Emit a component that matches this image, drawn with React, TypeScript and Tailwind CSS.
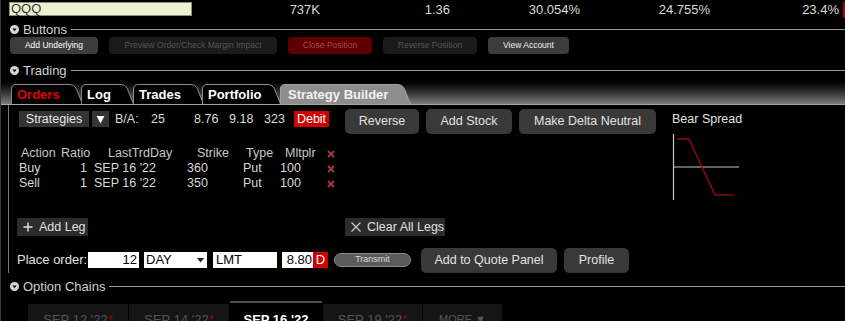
import React from "react";

const SectionHeader = ({ title, className = "" }: { title: string; className?: string }) => (
  <div className={"flex h-[16px] items-center " + className}>
    <svg width="9" height="9" viewBox="0 0 9 9" className="ml-[9px] mr-[4px] shrink-0">
      <circle cx="4.5" cy="4.5" r="4.5" fill="#d6d6d6" />
      <path d="M2.4 3.4 L6.6 3.4 L4.5 6.2 Z" fill="#000" />
    </svg>
    <span className="text-[13px] leading-none text-[#cfcfcf]">{title}</span>
    <div className="ml-[4px] h-px flex-1 bg-[#9a9a9a]" />
  </div>
);

const Tab = ({
  label,
  width,
  active,
  red,
  className = "",
}: {
  label: string;
  width: number;
  active?: boolean;
  red?: boolean;
  className?: string;
}) => {
  const w = width;
  const d = `M0.5,20 V5 Q0.5,0.5 5,0.5 H${w - 13} Q${w - 9},0.5 ${w - 7},4 L${w - 0.5},20`;
  return (
    <div className={"relative h-[20px] shrink-0 " + className} style={{ width: w }}>
      <svg className="absolute inset-0" width={w} height="20" viewBox={`0 0 ${w} 20`}>
        <path d={d} fill={active ? "#8d8d8d" : "#000"} stroke={active ? "#a0a0a0" : "#8a8a8a"} strokeWidth="1" />
      </svg>
      <span
        className={
          "relative block pl-[6px] pt-[3px] text-[13px] font-bold leading-[15px] " +
          (red ? "text-[#e00000]" : active ? "text-[#f2f2f2] pl-[8px]" : "text-white")
        }
      >
        {label}
      </span>
    </div>
  );
};

const XMark = () => (
  <svg width="8" height="8" viewBox="0 0 8 8">
    <path d="M1 1 L7 7 M7 1 L1 7" stroke="#9c3b3b" strokeWidth="2" />
  </svg>
);

const legs = [
  { action: "Buy", ratio: "1", day: "SEP 16 '22", strike: "360", type: "Put", mult: "100" },
  { action: "Sell", ratio: "1", day: "SEP 16 '22", strike: "350", type: "Put", mult: "100" },
];

const smallBtn = "flex h-[17px] items-center justify-center rounded-[4px] text-[8.5px]";
const bigBtn = "flex h-[25px] items-center justify-center rounded-[5px] bg-[#393939] text-[12.5px] text-[#e2e2e2]";

export default function App() {
  return (
    <div className="h-[321px] w-[845px] overflow-hidden border-l border-[#3a3a3a] bg-black font-['Liberation_Sans',Arial,sans-serif] text-[#dedede]">
      {/* quote row */}
      <div className="flex h-[20px] items-start">
        <div className="ml-[8px] mt-[2px] flex h-[14px] w-[184px] items-end border border-[#8d8f78] bg-[#eef0d2] pl-px text-[13px] leading-[13px] text-[#333]">
          QQQ
        </div>
        <div className="flex h-[20px] items-center text-[13px] text-[#dadada]">
          <span className="w-[128px] text-right">737K</span>
          <span className="w-[130px] text-right">1.36</span>
          <span className="w-[130px] text-right">30.054%</span>
          <span className="w-[130px] text-right">24.755%</span>
          <span className="w-[129px] text-right">23.4%</span>
          <span className="ml-[4px] h-[16px] w-[2px] bg-[#b00000]" />
        </div>
      </div>

      <SectionHeader title="Buttons" className="mt-[1px]" />

      <div className="flex gap-[11px] pl-[9px]">
        <div className={smallBtn + " w-[88px] bg-[#3c3c3c] text-white"}>Add Underlying</div>
        <div className={smallBtn + " w-[168px] bg-[#1b1b1b] text-[#555]"}>Preview Order/Check Margin Impact</div>
        <div className={smallBtn + " w-[84px] bg-[#5e0000] text-[#a84848]"}>Close Position</div>
        <div className={smallBtn + " w-[94px] bg-[#1b1b1b] text-[#555]"}>Reverse Position</div>
        <div className={smallBtn + " w-[81px] bg-[#3c3c3c] text-[#eee]"}>View Account</div>
      </div>

      <SectionHeader title="Trading" className="mt-[8px]" />

      {/* tab strip */}
      <div className="flex h-[27px] items-end border-b border-[#a5a5a5] bg-linear-to-b from-black to-[#7c7c7c] pl-[10px]">
        <Tab label="Orders" width={72} red />
        <Tab label="Log" width={53} className="-ml-[2px]" />
        <Tab label="Trades" width={71} className="-ml-[1px]" />
        <Tab label="Portfolio" width={79} className="-ml-[2px]" />
        <Tab label="Strategy Builder" width={131} active className="-ml-[1px]" />
      </div>

      {/* strategy builder panel */}
      <div className="ml-[7px] h-[168px] border-l border-[#7a7a7a] pl-[9px] pt-[4px]">
        <div className="flex">
          <div className="flex flex-col">
            <div className="flex h-[25px] items-start">
              <div className="mt-px flex w-[327px] items-center text-[12.5px] text-[#dcdcdc]">
                <div className="ml-px flex h-[16px] w-[70px] items-center justify-center bg-[#343434] text-[#e6e6e6]">
                  Strategies
                </div>
                <div className="ml-[3px] flex h-[16px] w-[17px] items-center justify-center bg-[#343434]">
                  <svg width="9" height="9" viewBox="0 0 9 9">
                    <path d="M0.5 1 L8.5 1 L4.5 8.5 Z" fill="#fff" />
                  </svg>
                </div>
                <span className="ml-[6px] w-[36px]">B/A:</span>
                <span className="w-[43px]">25</span>
                <span className="w-[35px]">8.76</span>
                <span className="w-[35px]">9.18</span>
                <span className="w-[30px]">323</span>
                <span className="flex h-[16px] w-[35px] items-center justify-center bg-[#d20000] text-white">Debit</span>
              </div>
              <div className={bigBtn + " w-[74px]"}>Reverse</div>
              <div className={bigBtn + " ml-[7px] w-[86px]"}>Add Stock</div>
              <div className={bigBtn + " ml-[7px] w-[137px]"}>Make Delta Neutral</div>
            </div>

            {/* legs table */}
            <div className="mt-[12px] w-[327px] text-[12.5px] text-[#d8d8d8]">
              <div className="flex h-[15px] items-center text-[#c8c8c8]">
                <span className="w-[41px] pl-[3px]">Action</span>
                <span className="w-[32px] pl-[2px]">Ratio</span>
                <span className="w-[90px] pl-[17px]">LastTrdDay</span>
                <span className="w-[60px] pl-[16px]">Strike</span>
                <span className="w-[38px] pl-[5px]">Type</span>
                <span className="w-[44px] pl-[6px]">Mltplr</span>
                <span className="pl-[4px]">
                  <XMark />
                </span>
              </div>
              {legs.map((l) => (
                <div key={l.action} className="flex h-[15px] items-center">
                  <span className="w-[41px] pl-px">{l.action}</span>
                  <span className="w-[32px] pr-[4px] text-right">{l.ratio}</span>
                  <span className="w-[90px] pl-[3px]">{l.day}</span>
                  <span className="w-[60px] pl-[6px]">{l.strike}</span>
                  <span className="w-[38px] pl-[2px]">{l.type}</span>
                  <span className="w-[44px] pl-px">{l.mult}</span>
                  <span className="pl-[4px]">
                    <XMark />
                  </span>
                </div>
              ))}
            </div>

            <div className="mt-[27px] flex h-[18px] text-[12.5px] text-[#e0e0e0]">
              <div className="w-[327px]">
                <div className="-ml-px flex h-[18px] w-[71px] items-center bg-[#2c2c2c] pl-[6px]">
                  <svg width="10" height="10" viewBox="0 0 10 10" className="mr-[6px]">
                    <path d="M5 0.5 V9.5 M0.5 5 H9.5" stroke="#e6e6e6" strokeWidth="1.4" />
                  </svg>
                  Add Leg
                </div>
              </div>
              <div className="flex h-[18px] w-[100px] items-center bg-[#2c2c2c] pl-[6px]">
                <svg width="10" height="10" viewBox="0 0 10 10" className="mr-[6px]">
                  <path d="M0.5 0.5 L9.5 9.5 M9.5 0.5 L0.5 9.5" stroke="#d0d0d0" strokeWidth="1.1" />
                </svg>
                Clear All Legs
              </div>
            </div>
          </div>

          {/* payoff diagram */}
          <div className="ml-[16px] flex flex-col">
            <span className="mt-[3px] text-[12.5px] leading-[14px] text-[#e0e0e0]">Bear Spread</span>
            <svg width="70" height="70" viewBox="0 0 70 70" className="mt-[6px]">
              <path d="M1.5 2 V68" stroke="#c8c8c8" strokeWidth="1.2" />
              <path d="M1.5 35 H67" stroke="#c8c8c8" strokeWidth="1.2" />
              <path d="M5 7 H17 L43 63 H62" fill="none" stroke="#8a0a0a" strokeWidth="1.6" />
            </svg>
          </div>
        </div>

        {/* place order */}
        <div className="mt-[12px] flex h-[24px] items-center text-[13px]">
          <span className="-ml-px w-[71px] text-[#e0e0e0]">Place order:</span>
          <div className="flex h-[16px] w-[51px] items-center justify-end bg-white pr-[2px] text-black">12</div>
          <div className="ml-[5px] flex h-[16px] w-[63px] items-center justify-between bg-white pl-[2px] pr-[3px] text-black">
            DAY
            <svg width="7" height="5" viewBox="0 0 7 5">
              <path d="M0 0 H7 L3.5 4.5 Z" fill="#222" />
            </svg>
          </div>
          <div className="ml-[6px] flex h-[16px] w-[64px] items-center bg-white pl-[3px] text-black">LMT</div>
          <div className="ml-[5px] flex h-[16px] w-[31px] items-center justify-end bg-white pr-px text-black">8.80</div>
          <div className="flex h-[16px] w-[15px] items-center justify-center bg-[#d40000] text-white">D</div>
          <div className="ml-[6px] flex h-[14px] w-[77px] items-center justify-center rounded-full border border-[#8a8a8a] bg-[#5a5a5a] text-[9px] text-[#d8d8d8]">
            Transmit
          </div>
          <div className={bigBtn + " ml-[10px] h-[24px] w-[136px]"}>Add to Quote Panel</div>
          <div className={bigBtn + " ml-[7px] h-[24px] w-[65px]"}>Profile</div>
        </div>
      </div>

      <SectionHeader title="Option Chains" className="mt-[5px]" />

      {/* expiry tabs */}
      <div className="mt-[7px] flex items-start gap-px pl-[27px] text-[13px]">
        {["SEP 12 '22", "SEP 14 '22"].map((d) => (
          <div key={d} className="mt-[3px] h-[20px] w-[100px] bg-[#151515] pt-[6px] text-center text-[#565656]">
            {d}
            <span className="text-[#a00000]">*</span>
          </div>
        ))}
        <div className="h-[23px] w-[92px] border-t-2 border-[#4d4d4d] bg-black pt-[7px] text-center font-bold text-white">
          SEP 16 '22
        </div>
        <div className="mt-[3px] h-[20px] w-[99px] bg-[#151515] pt-[6px] text-center text-[#565656]">
          SEP 19 '22<span className="text-[#a00000]">*</span>
        </div>
        <div className="mt-[3px] h-[20px] w-[79px] bg-[#151515] pt-[7px] text-center text-[11px] text-[#565656]">
          MORE ▼
        </div>
      </div>
    </div>
  );
}
